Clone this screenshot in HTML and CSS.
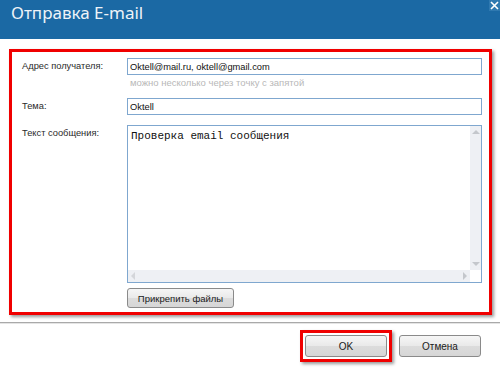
FILE: index.html
```html
<!DOCTYPE html>
<html>
<head>
    <title>Отправка E-mail</title>
    <link rel="stylesheet" href="styles.css">
</head>
<body>
    <div class="dialog">
        <div class="titlebar">
            <span class="title">Отправка E-mail</span>
            <span class="close">
                <svg width="9" height="9" viewBox="0 0 9 9"><path d="M1 1L8 8M8 1L1 8" stroke="#fff" stroke-width="1.6"/></svg>
            </span>
        </div>

        <div class="body">
            <div class="highlight form">
                <div class="row">
                    <label class="label">Адрес получателя:</label>
                    <div class="field">
                        <input class="input" type="text" value="Oktell@mail.ru, oktell@gmail.com">
                        <div class="hint">можно несколько через точку с запятой</div>
                    </div>
                </div>
                <div class="row row-subject">
                    <label class="label">Тема:</label>
                    <div class="field">
                        <input class="input" type="text" value="Oktell">
                    </div>
                </div>
                <div class="row row-message">
                    <label class="label label-top">Текст сообщения:</label>
                    <div class="field">
                        <div class="textarea">
                            <div class="textarea-text">Проверка email сообщения</div>
                            <div class="vscroll">
                                <span class="arrow arrow-up"></span>
                                <span class="arrow arrow-down"></span>
                            </div>
                            <div class="hscroll">
                                <span class="arrow arrow-left"></span>
                                <span class="arrow arrow-right"></span>
                            </div>
                            <div class="corner"></div>
                        </div>
                        <button class="btn btn-attach">Прикрепить файлы</button>
                    </div>
                </div>
            </div>
        </div>

        <div class="footer">
            <span class="highlight ok-wrap"><button class="btn btn-dialog">OK</button></span>
            <button class="btn btn-dialog">Отмена</button>
        </div>
    </div>
</body>
</html>
```

FILE: styles.css
```css
body {
    margin: 0;
    width: 500px;
    height: 369px;
    overflow: hidden;
    background-color: #fff;
    font-family: "Liberation Sans", Arial, sans-serif;
    font-size: 9.3px;
    color: #1e1e1e;
}
.dialog {
    display: flex;
    flex-direction: column;
    height: 369px;
}
.titlebar {
    height: 39px;
    background-color: #1b69a4;
    display: flex;
    justify-content: space-between;
    align-items: flex-start;
    flex-shrink: 0;
}
.title {
    font-family: "Noto Sans", "Open Sans", sans-serif;
    font-size: 17px;
    color: #eef3f8;
    padding: 2px 0 0 11px;
    line-height: 22px;
}
.close {
    width: 11px;
    height: 11px;
    background-color: #2f79b0;
    display: flex;
    align-items: center;
    justify-content: center;
}
.body {
    padding: 10px 8px 0 9px;
    height: 273px;
    border-bottom: 1px solid #a9a9a9;
    box-shadow: 0 1px 0 #e4e4e4;
}
.highlight {
    border: 3px solid #f00000;
    box-shadow: 2px 2px 3px rgba(0, 0, 0, 0.4);
}
.form {
    padding: 6px 7px 4px 10px;
}
.row {
    display: flex;
}
.row-subject {
    margin-top: 9px;
}
.row-message {
    margin-top: 10px;
}
.label {
    width: 105px;
    flex-shrink: 0;
    line-height: 17px;
    color: #2a2a2a;
}
.label-top {
    line-height: 16px;
}
.field {
    flex: 1;
}
.input {
    display: block;
    box-sizing: border-box;
    width: 100%;
    height: 17px;
    margin: 0;
    padding: 0 2px;
    border: 1px solid #7fa7cf;
    font-family: "Liberation Sans", Arial, sans-serif;
    font-size: 9.3px;
    color: #111;
    outline: none;
}
.hint {
    margin-top: 2px;
    padding-left: 3px;
    line-height: 12px;
    color: #b8b8b8;
    font-size: 9.5px;
}
.textarea {
    position: relative;
    box-sizing: border-box;
    height: 158px;
    border: 1px solid #7fa7cf;
    background-color: #fff;
}
.textarea-text {
    padding: 4px 0 0 3px;
    font-family: "Liberation Mono", "Courier New", monospace;
    font-size: 11px;
    line-height: 13px;
    color: #111;
}
.vscroll {
    position: absolute;
    top: 0;
    right: 0;
    bottom: 12px;
    width: 11px;
    background-color: #eef0f4;
}
.hscroll {
    position: absolute;
    left: 0;
    right: 11px;
    bottom: 0;
    height: 12px;
    background-color: #eef0f4;
}
.corner {
    position: absolute;
    right: 0;
    bottom: 0;
    width: 11px;
    height: 12px;
    background-color: #fff;
}
.arrow {
    position: absolute;
    width: 0;
    height: 0;
}
.arrow-up {
    top: 4px;
    left: 2px;
    border-left: 4px solid transparent;
    border-right: 4px solid transparent;
    border-bottom: 4px solid #c4c7cc;
}
.arrow-down {
    bottom: 4px;
    left: 2px;
    border-left: 4px solid transparent;
    border-right: 4px solid transparent;
    border-top: 4px solid #c4c7cc;
}
.arrow-left {
    top: 2px;
    left: 3px;
    border-top: 4px solid transparent;
    border-bottom: 4px solid transparent;
    border-right: 4px solid #d4d6da;
}
.arrow-right {
    top: 2px;
    right: 3px;
    border-top: 4px solid transparent;
    border-bottom: 4px solid transparent;
    border-left: 4px solid #c4c7cc;
}
.btn {
    box-sizing: border-box;
    border: 1px solid #8a8a8a;
    border-radius: 3px;
    background: linear-gradient(#f6f6f6, #e9e9e9 50%, #dcdcdc 51%, #d6d6d6);
    font-family: "Liberation Sans", Arial, sans-serif;
    font-size: 9.5px;
    color: #1a1a1a;
    padding: 0;
}
.btn-attach {
    display: block;
    margin-top: 5px;
    width: 107px;
    height: 20px;
}
.footer {
    display: flex;
    justify-content: flex-end;
    align-items: center;
    gap: 7px;
    padding: 7px 19px 0 0;
}
.ok-wrap {
    display: block;
    padding: 2px;
}
.btn-dialog {
    display: block;
    width: 82px;
    height: 22px;
    font-size: 10px;
}
```
